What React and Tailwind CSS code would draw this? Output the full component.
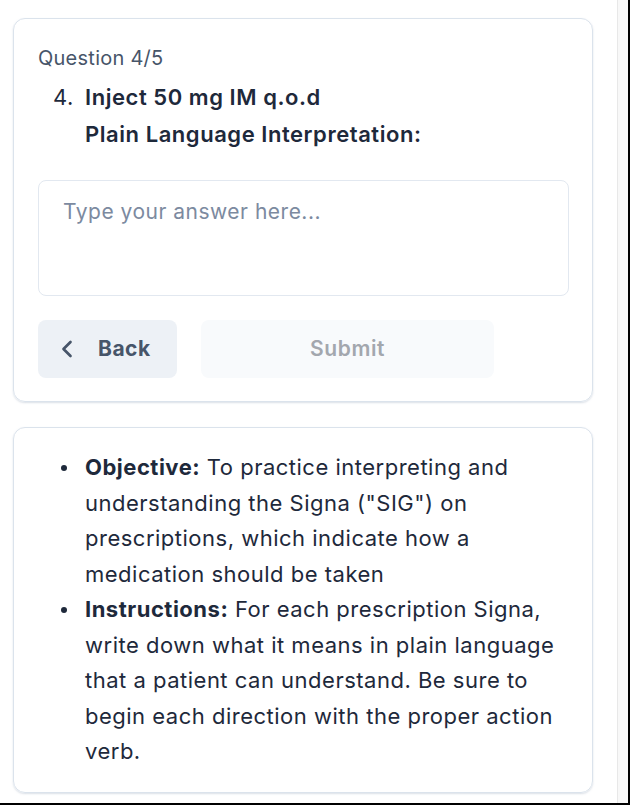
import React from "react";
import { ChevronLeft } from "lucide-react";

function Bullet({ children }) {
  return (
    <li className="flex">
      <div className="flex h-[35.5px] w-[47px] shrink-0 items-center pl-[23px]">
        <span className="h-[6px] w-[6px] rounded-full bg-[#1e293b]" />
      </div>
      <div>{children}</div>
    </li>
  );
}

export default function App() {
  return (
    <div
      className="flex h-[805px] w-[630px] overflow-hidden border-r-2 border-b-2 border-black bg-white"
      style={{ fontFamily: "Inter, 'Noto Sans', sans-serif" }}
    >
      <div className="flex w-[617px] flex-col pl-[13px] pt-[18px]">
        {/* Card 1 */}
        <div className="flex h-[384px] w-[580px] flex-col rounded-[12px] border border-[#dbe3ec] px-6 pt-[25px] shadow-[0_1px_2px_rgba(148,163,184,0.35)]">
          <div className="text-[20px] leading-[28px] tracking-[0.25px] text-[#475569]">
            Question 4/5
          </div>
          <div className="mt-[7px] flex text-[22px] leading-[37px] tracking-[0.55px] text-[#1e293b]">
            <div className="w-[47px] shrink-0 pl-[15px]">4.</div>
            <div className="font-semibold">
              <div>Inject 50 mg IM q.o.d</div>
              <div>Plain Language Interpretation:</div>
            </div>
          </div>
          <div className="mt-[27px] h-[116px] w-[531px] rounded-[8px] border border-[#e2e8f0] px-6 pt-[17px] text-[21px] leading-[28px] tracking-[0.5px] text-[#7c8aa0]">
            Type your answer here...
          </div>
          <div className="mt-6 flex gap-6">
            <div className="flex h-[58px] w-[139px] items-center gap-[17px] rounded-[8px] bg-[#edf1f6] pl-[15px] text-[21px] font-bold tracking-[0.5px] text-[#475569]">
              <ChevronLeft size={28} strokeWidth={2.3} />
              <span>Back</span>
            </div>
            <div className="flex h-[58px] w-[293px] items-center justify-center rounded-[8px] bg-[#f8fafc] text-[21px] font-semibold tracking-[0.6px] text-[#a3a7ae]">
              Submit
            </div>
          </div>
        </div>

        {/* Card 2 */}
        <div className="mt-[25px] h-[366px] w-[580px] rounded-[12px] border border-[#dbe3ec] pt-[22px] shadow-[0_1px_2px_rgba(148,163,184,0.35)]">
          <ul className="pl-6 pr-6 text-[22px] leading-[35.5px] tracking-[0.5px] text-[#1e293b]">
            <Bullet>
              <span className="font-bold">Objective:</span> To practice
              interpreting and understanding the Signa ("SIG") on
              prescriptions, which indicate how a medication should be taken
            </Bullet>
            <Bullet>
              <span className="font-bold">Instructions:</span> For each
              prescription Signa, write down what it means in plain language
              that a patient can understand. Be sure to begin each direction
              with the proper action verb.
            </Bullet>
          </ul>
        </div>
      </div>
      <div className="h-full w-[11px] border-l border-[#e8e8e8] bg-[#f8f8f8]" />
    </div>
  );
}
